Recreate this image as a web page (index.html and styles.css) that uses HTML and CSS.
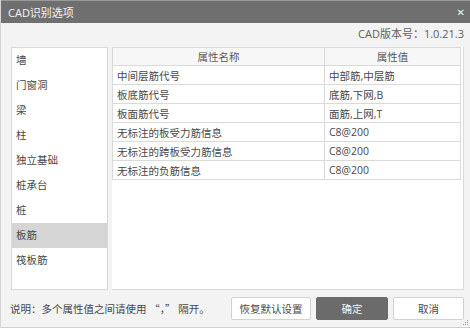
FILE: index.html
```html
<!DOCTYPE html>
<html lang="zh">
<head>
    <meta charset="UTF-8">
    <title>CAD识别选项</title>
    <link rel="stylesheet" href="styles.css">
</head>
<body>
<div class="window">
    <div class="titlebar">
        <span class="title">CAD识别选项</span>
        <span class="close">&#x2715;</span>
    </div>

    <div class="version">CAD版本号：1.0.21.3</div>

    <div class="main">
        <ul class="list">
            <li>墙</li>
            <li>门窗洞</li>
            <li>梁</li>
            <li>柱</li>
            <li>独立基础</li>
            <li>桩承台</li>
            <li>桩</li>
            <li class="selected">板筋</li>
            <li>筏板筋</li>
        </ul>

        <div class="panel">
            <table class="props">
                <tr>
                    <th class="col-name">属性名称</th>
                    <th class="col-value">属性值</th>
                </tr>
                <tr><td>中间层筋代号</td><td>中部筋,中层筋</td></tr>
                <tr><td>板底筋代号</td><td>底筋,下网,B</td></tr>
                <tr><td>板面筋代号</td><td>面筋,上网,T</td></tr>
                <tr><td>无标注的板受力筋信息</td><td>C8@200</td></tr>
                <tr><td>无标注的跨板受力筋信息</td><td>C8@200</td></tr>
                <tr><td>无标注的负筋信息</td><td>C8@200</td></tr>
            </table>
        </div>
    </div>

    <div class="footer">
        <span class="note">说明：多个属性值之间请使用 <span class="cjk">“，”</span> 隔开。</span>
        <button class="btn btn-reset">恢复默认设置</button>
        <button class="btn btn-ok">确定</button>
        <button class="btn btn-cancel">取消</button>
    </div>

    <svg class="grip" width="6" height="6" viewBox="0 0 6 6">
        <rect x="4" y="0" width="1" height="1" fill="#9a9a9a"/>
        <rect x="2" y="2" width="1" height="1" fill="#9a9a9a"/>
        <rect x="4" y="2" width="1" height="1" fill="#9a9a9a"/>
        <rect x="0" y="4" width="1" height="1" fill="#9a9a9a"/>
        <rect x="2" y="4" width="1" height="1" fill="#9a9a9a"/>
        <rect x="4" y="4" width="1" height="1" fill="#9a9a9a"/>
    </svg>
</div>
</body>
</html>
```

FILE: styles.css
```css
body {
  margin: 0;
  background: #ffffff;
  font-family: "Open Sans", "Noto Sans CJK SC", sans-serif;
  font-size: 10.5px;
  color: #484848;
}

.window {
  position: relative;
  width: 470px;
  height: 328px;
  box-sizing: border-box;
  background: #f3f3f3;
  border-left: 1px solid #d6d6d6;
  border-bottom: 1px solid #d0d0d0;
  display: flex;
  flex-direction: column;
}

.titlebar {
  height: 23px;
  box-sizing: border-box;
  background: #6f6f6f;
  border-top: 1px solid #9a9a9a;
  color: #f4f4f4;
  display: flex;
  align-items: center;
  justify-content: space-between;
  padding: 0 5px 0 7px;
}

.title {
  font-size: 11px;
}

.close {
  font-size: 10px;
  font-family: "DejaVu Sans", sans-serif;
}

.version {
  height: 24px;
  line-height: 22px;
  text-align: right;
  padding-right: 6px;
  font-size: 11px;
  color: #616161;
}

.main {
  display: flex;
  gap: 4px;
  height: 243px;
  padding: 0 6px 0 10px;
}

.list {
  width: 97px;
  box-sizing: border-box;
  margin: 0;
  padding: 0;
  list-style: none;
  background: #ffffff;
  border: 1px solid #dadada;
}

.list li {
  height: 25px;
  line-height: 25px;
  padding-left: 4px;
}

.list .selected {
  background: #d5d5d5;
}

.panel {
  flex: 1;
  background: #ffffff;
  border: 1px solid #dadada;
  border-top: none;
  border-left: none;
}

.props {
  width: 349px;
  border-collapse: collapse;
}

.props th,
.props td {
  border: 1px solid #dadada;
  height: 18px;
  padding: 0 4px;
  font-weight: normal;
  text-align: left;
  white-space: nowrap;
}

.props th {
  height: 17px;
  text-align: center;
  background: #f7f7f7;
  color: #5a5a5a;
}

.props .col-name {
  width: 203px;
}

.footer {
  flex: 1;
  display: flex;
  align-items: center;
  padding: 0 6px 0 9px;
}

.note {
  flex: 1;
}

.cjk {
  font-family: "Noto Sans CJK SC", sans-serif;
}

.btn {
  height: 23px;
  margin-left: 5px;
  padding: 0;
  border: 1px solid #d2d2d2;
  border-radius: 2px;
  background: #ffffff;
  font-family: "Open Sans", "Noto Sans CJK SC", sans-serif;
  font-size: 10.5px;
  color: #484848;
}

.btn-reset {
  width: 80px;
}

.btn-ok {
  width: 72px;
  background: #6b6b6b;
  border-color: #6b6b6b;
  color: #f4f4f4;
}

.btn-cancel {
  width: 71px;
}

.grip {
  position: absolute;
  right: 1px;
  bottom: 1px;
}
```
